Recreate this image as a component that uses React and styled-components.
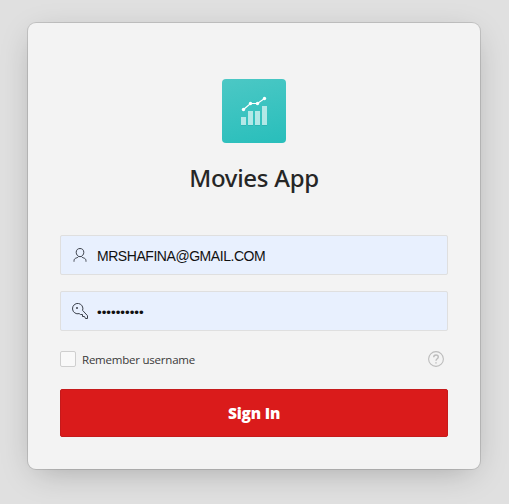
import React from "react";
import styled, { createGlobalStyle } from "styled-components";

const GlobalStyle = createGlobalStyle`
  *, *::before, *::after { box-sizing: border-box; }
  html, body { margin: 0; height: 100%; background: #e0e0e0; overflow: hidden; }
  body { font-family: "Open Sans", "Noto Sans", sans-serif; color: #262626; }
`;

const Page = styled.main`
  display: flex;
  align-items: flex-start;
  padding: 23px 0 0 28px;
  height: 504px;
`;

const Card = styled.form`
  display: flex;
  flex-direction: column;
  width: 452px;
  height: 446px;
  padding: 56px 32px 32px;
  border-radius: 8px;
  background: #f3f3f3;
  box-shadow: 0 0 0 1px rgba(0, 0, 0, 0.12), 0 8px 32px -8px rgba(0, 0, 0, 0.28);
`;

const Logo = styled.div`
  align-self: center;
  width: 64px;
  height: 64px;
  border-radius: 4px;
  overflow: hidden;
  background: linear-gradient(165deg, #4cc8c5, #28bebb);
  svg { display: block; }
`;

const Title = styled.h1`
  margin: 19px 0 41px;
  height: 32px;
  text-align: center;
  white-space: nowrap;
  font: 500 24px/32px "Noto Sans", "Open Sans", sans-serif;
  letter-spacing: -0.28px;
`;

const Field = styled.label`
  display: flex;
  align-items: center;
  height: 40px;
  margin-bottom: 16px;
  padding: 0 12px 0 11px;
  gap: 9px;
  border: 1px solid #dfdfdf;
  border-radius: 2px;
  background: #e8f0fe;
  svg { flex: none; }
`;

const Input = styled.input`
  flex: 1;
  min-width: 0;
  height: 22px;
  padding: 2px 0 0;
  border: 0;
  outline: 0;
  background: transparent;
  color: #111;
  font: ${(p) => (p.type === "password" ? "13.33px" : "14px")}/20px "Liberation Sans", Arial, sans-serif;
  letter-spacing: ${(p) => (p.type === "password" ? "0" : "-0.45px")};
`;

const Options = styled.div`
  display: flex;
  align-items: center;
  height: 24px;
  margin: 0 4px 18px 0;
`;

const Remember = styled.label`
  display: flex;
  align-items: center;
  gap: 6px;
  flex: 1;
  font-size: 11.5px;
  line-height: 16px;
  letter-spacing: -0.22px;
  color: #393939;
`;

const RememberText = styled.span`
  padding-top: 2px;
`;

const Checkbox = styled.input`
  appearance: none;
  width: 16px;
  height: 16px;
  margin: 0;
  border: 1px solid #cfcfcf;
  border-radius: 2px;
  background: #f9f9f9;
`;

const SignIn = styled.button`
  height: 48px;
  padding: 0;
  border: 1px solid #c51a1b;
  border-radius: 2px;
  background: #da1b1b;
  color: #fff;
  font: 800 15.5px/24px "Open Sans", "Noto Sans", sans-serif;
  letter-spacing: -0.2px;
`;

function ChartIcon() {
  return (
    <svg width="64" height="64" viewBox="0 0 64 64">
      <g fill="#fff" fillOpacity=".62">
        <path d="M19 38h5v8h-5zM26 32h5v14h-5zM33 32h5v14h-5zM40 27h5v19h-5z" />
      </g>
      <path d="M19 46h5M26 46h5M33 46h5M40 46h5" transform="translate(0 .5)" stroke="#168f8c" strokeOpacity=".25" />
      <path d="M21.5 30.5 28.5 24.5H35.5L42.5 19.5" fill="none" stroke="#fff" strokeWidth="1.2" />
      <g fill="#fff">
        <circle cx="21.5" cy="30.5" r="1.7" />
        <circle cx="28.5" cy="24.5" r="1.7" />
        <circle cx="35.5" cy="24.5" r="1.7" />
        <circle cx="42.5" cy="19.5" r="1.7" />
      </g>
    </svg>
  );
}

function UserIcon() {
  return (
    <svg width="16" height="16" viewBox="0 0 16 16" fill="none" stroke="#3c414b">
      <path d="M8 1.5c2.4 0 3.8 1.6 3.8 3.8S10.200 9.700 8 9.700 4.200 7.500 4.200 5.300 5.600 1.500 8 1.500z" />
      <path d="M6.500 9.500C5.800 10.900 4.500 10.700 3.300 11.400 2.200 12 2 13 2 14.700M9.500 9.500C10.200 10.900 11.500 10.700 12.700 11.400 13.800 12 14 13 14 14.700" />
    </svg>
  );
}

function KeyIcon() {
  return (
    <svg width="16" height="16" viewBox="0 0 16 16" fill="none" stroke="#3c414b">
      <path d="M10.600 7.400A5.200 5.200 0 1 0 7.200 10.600L8.500 11.500H10.500V13.500H12.500L13.500 15.500H15.500V12.700z" />
      <circle cx="5" cy="5" r="1" fill="#3c414b" stroke="none" />
    </svg>
  );
}

function HelpIcon() {
  return (
    <svg width="16" height="16" viewBox="0 0 16 16" fill="none" stroke="#bcbcbc">
      <circle cx="8" cy="8" r="7.400" strokeWidth="1.100" />
      <path d="M5.700 6.200C5.700 4.800 6.700 4 8 4s2.300.8 2.300 2.100C10.300 7.800 8 7.800 8 9.800M8 11.200v1.300" strokeWidth="1.400" />
    </svg>
  );
}

export default function App() {
  return (
    <>
      <GlobalStyle />
      <Page>
        <Card onSubmit={(e) => e.preventDefault()}>
          <Logo><ChartIcon /></Logo>
          <Title>Movies App</Title>
          <Field>
            <UserIcon />
            <Input type="text" aria-label="Username" defaultValue="MRSHAFINA@GMAIL.COM" />
          </Field>
          <Field>
            <KeyIcon />
            <Input type="password" aria-label="Password" defaultValue="0000000000" />
          </Field>
          <Options>
            <Remember>
              <Checkbox type="checkbox" />
              <RememberText>Remember username</RememberText>
            </Remember>
            <HelpIcon />
          </Options>
          <SignIn>Sign In</SignIn>
        </Card>
      </Page>
    </>
  );
}
